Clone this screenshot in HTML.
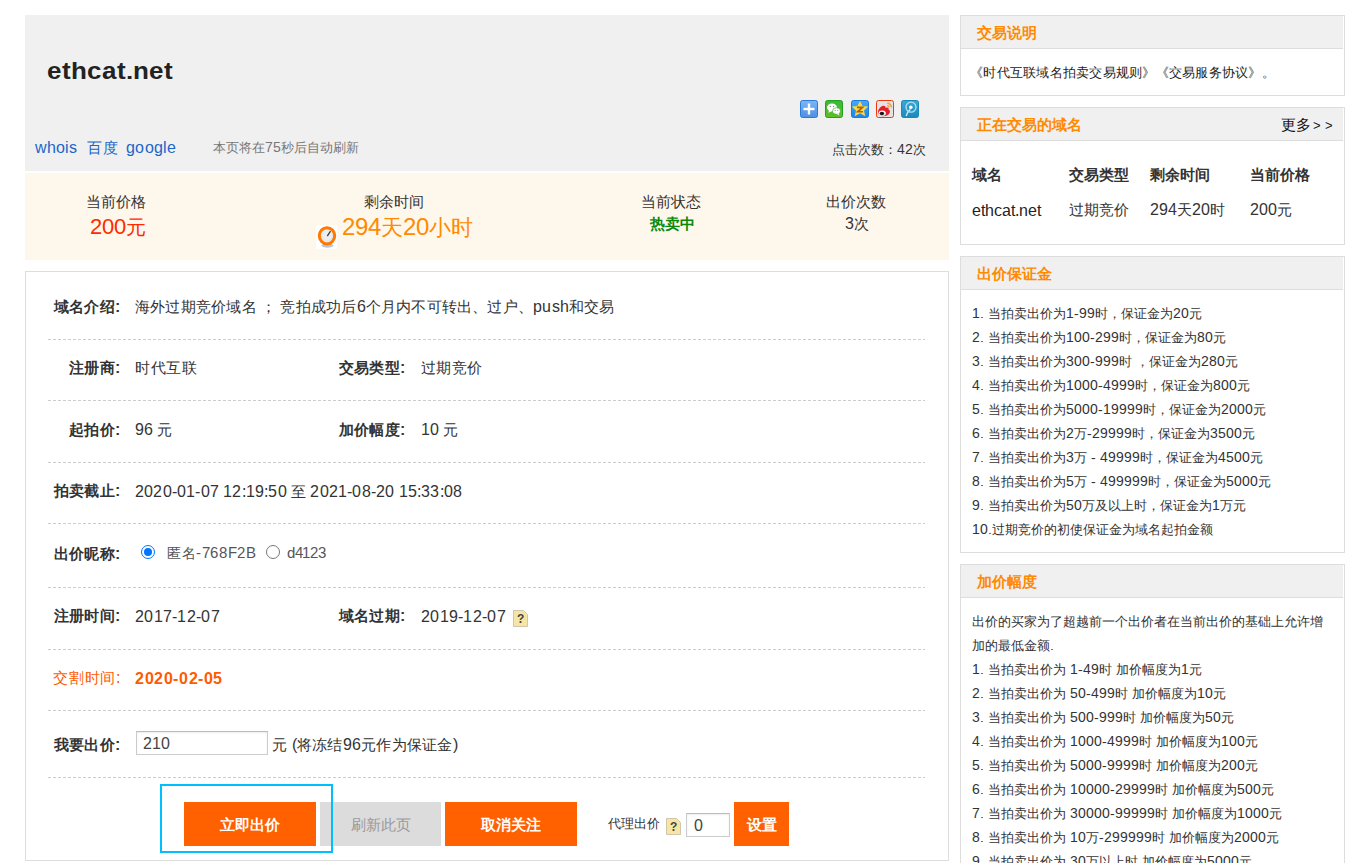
<!DOCTYPE html>
<html><head><meta charset="utf-8">
<style>
@font-face{font-family:"Liberation Sans";src:local("Liberation Sans"),local("LiberationSans");font-weight:normal;size-adjust:109%;unicode-range:U+0000-00FF;}
@font-face{font-family:"Liberation Sans";src:local("Liberation Sans Bold"),local("LiberationSans-Bold");font-weight:bold;size-adjust:109%;unicode-range:U+0000-00FF;}
*{margin:0;padding:0;box-sizing:border-box}
html,body{width:1370px;height:863px;overflow:hidden;background:#fff}
body{position:relative;font-family:"Liberation Sans",sans-serif;color:#333;font-size:15px}
.a{position:absolute;white-space:nowrap}
.hdr{position:absolute;left:25px;top:15px;width:924px;height:156px;background:#f0f0f0}
.stat{position:absolute;left:25px;top:173px;width:924px;height:87px;background:#fef7ec}
.main{position:absolute;left:25px;top:271px;width:924px;height:590px;border:1px solid #ddd}
.dl{position:absolute;left:48px;width:877px;height:1px;background:repeating-linear-gradient(to right,#ccc 0 3px,transparent 3px 5px)}
.lb{position:absolute;font-weight:bold;font-size:15px;line-height:15px;text-align:right;white-space:nowrap;letter-spacing:0.3px;margin-right:-0.3px}
.v{position:absolute;font-size:15px;line-height:15px;white-space:nowrap}
.box{position:absolute;left:960px;width:385px;border:1px solid #ddd;background:#fff}
.bh{position:absolute;left:0;top:0;width:382px;height:33px;background:#f0f0f0;border-bottom:1px solid #ddd}
.bt{position:absolute;left:16px;top:9px;font-size:15px;line-height:15px;font-weight:bold;color:#ff8a00;white-space:nowrap}
.ls{position:absolute;left:11px;font-size:13px;line-height:24px;white-space:nowrap}
.btn{position:absolute;top:802px;height:44px;background:#ff6000;color:#fff;font-weight:bold;font-size:15px;line-height:44px;text-align:center}
</style></head><body>

<!-- header -->
<div class="hdr"></div>
<div class="a" style="left:47px;top:61px;font-size:21px;line-height:21px;font-weight:bold;color:#222;letter-spacing:0.2px;transform:scaleX(1.13);transform-origin:0 0">ethcat.net</div>

<svg class="a" style="left:800px;top:100px" width="119" height="18" viewBox="0 0 119 18">
<defs>
<linearGradient id="g1" x1="0" y1="0" x2="0" y2="1"><stop offset="0" stop-color="#7db6f5"/><stop offset="1" stop-color="#4a90e6"/></linearGradient>
<linearGradient id="g2" x1="0" y1="0" x2="0" y2="1"><stop offset="0" stop-color="#3cb83c"/><stop offset="1" stop-color="#5cc020"/></linearGradient>
<linearGradient id="g3" x1="0" y1="0" x2="0" y2="1"><stop offset="0" stop-color="#45aaf8"/><stop offset="1" stop-color="#1a84ea"/></linearGradient>
<linearGradient id="g5" x1="0" y1="0" x2="0" y2="1"><stop offset="0" stop-color="#3aa8d8"/><stop offset="1" stop-color="#1a88b8"/></linearGradient>
</defs>
<rect x="0.5" y="0.5" width="17" height="17" rx="2" fill="url(#g1)" stroke="#2a7ad6"/>
<rect x="3.5" y="7.8" width="11" height="2.4" fill="#fff"/><rect x="7.8" y="3.5" width="2.4" height="11" fill="#fff"/>
<g transform="translate(25,0)">
<rect x="0.5" y="0.5" width="17" height="17" rx="2" fill="url(#g2)" stroke="#24a024"/>
<ellipse cx="7" cy="7.5" rx="5" ry="4" fill="#fff"/><path d="M4 10 L3.5 13 L6.5 11 Z" fill="#fff"/>
<ellipse cx="11.5" cy="11" rx="4" ry="3.3" fill="#fff" stroke="#2aa52a" stroke-width=".6"/><path d="M13.5 13 L14.5 15.5 L11.8 14 Z" fill="#fff"/>
<circle cx="5.3" cy="6.3" r=".6" fill="#666"/><circle cx="8.6" cy="6.3" r=".6" fill="#666"/><circle cx="10.2" cy="10.3" r=".5" fill="#666"/><circle cx="12.8" cy="10.3" r=".5" fill="#666"/>
</g>
<g transform="translate(51,0)">
<rect x="0.5" y="0.5" width="17" height="17" rx="2" fill="url(#g3)" stroke="#1a7ae0"/>
<path d="M9 0.8 L11.6 6 L17.2 6.6 L13 10.4 L14.3 16.2 L9 13.2 L3.7 16.2 L5 10.4 L0.8 6.6 L6.4 6 Z" fill="#f6d848"/>
<path d="M6 7.4 H11.6 L6.6 11.8 H12" stroke="#b0600c" stroke-width="1.6" fill="none"/>
</g>
<g transform="translate(76,0)">
<rect x="0.5" y="0.5" width="17" height="17" rx="2" fill="#e4e4e4" stroke="#ee3a12"/>
<path d="M2 12.2 C2 9.5 4.5 6.5 7 5.8 C8.8 5.3 9.6 6.2 9.3 7.6 C11.5 7 13.2 7.8 12.6 9.6 C14.2 10.2 14.6 12.2 13 14 C11.5 15.6 9 16.3 6.5 16.2 C3.8 16 2 14.5 2 12.2 Z" fill="#e6202a"/>
<ellipse cx="6.2" cy="13.2" rx="3.6" ry="2.6" fill="#fff"/><ellipse cx="5.9" cy="13.5" rx="2.3" ry="1.8" fill="#1a1a1a"/>
<path d="M11.2 3.2 A4.3 4.3 0 0 1 15.5 7.5" stroke="#f2a234" stroke-width="1.6" fill="none"/><path d="M11.2 5.8 A1.8 1.8 0 0 1 13 7.6" stroke="#f2a234" stroke-width="1.4" fill="none"/>
</g>
<g transform="translate(101,0)">
<rect x="0.5" y="0.5" width="17" height="17" rx="2" fill="url(#g5)" stroke="#1a88b8"/>
<path d="M5.2 16 C6 13 7.5 10.8 9.4 9.2" stroke="#cdeaf6" stroke-width="1.5" fill="none"/>
<circle cx="10" cy="7.2" r="5" fill="none" stroke="#b8e0f2" stroke-width="1.3"/>
<circle cx="9.8" cy="7.2" r="1.8" fill="#fff"/>
</g>
</svg>
<div class="a" style="left:35px;top:140px;font-size:15px;line-height:15px;color:#1a66c8">whois</div>
<div class="a" style="left:87px;top:140px;font-size:15px;line-height:15px;color:#1a66c8;letter-spacing:0.5px">百度</div>
<div class="a" style="left:126px;top:140px;font-size:15px;line-height:15px;color:#1a66c8;letter-spacing:0.3px">google</div>
<div class="a" style="left:213px;top:141px;font-size:13px;line-height:13px;color:#777">本页将在75秒后自动刷新</div>
<div class="a" style="left:832px;top:143px;font-size:13px;line-height:13px;color:#333">点击次数：42次</div>

<!-- stats -->
<div class="stat"></div>
<div class="a" style="left:23px;top:194px;width:185px;text-align:center;font-size:15px;line-height:15px">当前价格</div>
<div class="a" style="left:25px;top:217px;width:185px;text-align:center;font-size:20px;line-height:20px;color:#ff2a00">200元</div>
<div class="a" style="left:209px;top:194px;width:370px;text-align:center;font-size:15px;line-height:15px">剩余时间</div>
<div class="a" style="left:316px;top:225px;width:21px;height:24px;background:#fff"><svg width="21" height="24" viewBox="0 0 21 24"><ellipse cx="11.5" cy="20.5" rx="6" ry="2.2" fill="#7a9ab8" opacity=".55"/><ellipse cx="11" cy="10.8" rx="7.7" ry="8.1" fill="#e6e8ea" stroke="#ff7800" stroke-width="3"/><ellipse cx="11.3" cy="10.3" rx="4.5" ry="4.8" fill="#eceef0"/><path d="M11.6 10.6 L14.2 6.6" stroke="#444" stroke-width="1.4" stroke-linecap="round"/></svg></div>
<div class="a" style="left:342px;top:216px;font-size:22px;line-height:22px;color:#ff8a00">294天20小时</div>
<div class="a" style="left:578px;top:194px;width:185px;text-align:center;font-size:15px;line-height:15px">当前状态</div>
<div class="a" style="left:580px;top:216px;width:185px;text-align:center;font-size:15px;line-height:15px;font-weight:bold;color:#0a8a0a">热卖中</div>
<div class="a" style="left:764px;top:194px;width:184px;text-align:center;font-size:15px;line-height:15px">出价次数</div>
<div class="a" style="left:765px;top:216px;width:184px;text-align:center;font-size:15px;line-height:15px">3次</div>


<!-- main -->
<div class="main"></div>
<div class="dl" style="top:339px"></div>
<div class="dl" style="top:400px"></div>
<div class="dl" style="top:462px"></div>
<div class="dl" style="top:523px"></div>
<div class="dl" style="top:587px"></div>
<div class="dl" style="top:649px"></div>
<div class="dl" style="top:710px"></div>
<div class="dl" style="top:777px"></div>

<div class="lb" style="right:1250px;top:299px">域名介绍:</div>
<div class="v" style="left:135px;top:299px;letter-spacing:0.22px">海外过期竞价域名 ； 竞拍成功后6个月内不可转出、过户、push和交易</div>

<div class="lb" style="right:1250px;top:360px">注册商:</div>
<div class="v" style="left:135px;top:360px;letter-spacing:0.5px">时代互联</div>
<div class="lb" style="right:965px;top:360px">交易类型:</div>
<div class="v" style="left:421px;top:360px;letter-spacing:0.4px">过期竞价</div>

<div class="lb" style="right:1250px;top:422px">起拍价:</div>
<div class="v" style="left:135px;top:422px">96 元</div>
<div class="lb" style="right:965px;top:422px">加价幅度:</div>
<div class="v" style="left:421px;top:422px">10 元</div>

<div class="lb" style="right:1250px;top:483px">拍卖截止:</div>
<div class="v" style="left:135px;top:484px;letter-spacing:0.2px">2020-01-07 12:19:50 至 2021-08-20 15:33:08</div>

<div class="lb" style="right:1250px;top:546px">出价昵称:</div>
<div class="a" style="left:141px;top:545px;width:14px;height:14px;border-radius:50%;border:1px solid #0075ff;background:#fff"><div style="position:absolute;left:2px;top:2px;width:8px;height:8px;border-radius:50%;background:#0075ff"></div></div>
<div class="v" style="left:167px;top:546px;color:#555;font-size:14px;line-height:14px;letter-spacing:0.6px">匿名-768F2B</div>
<div class="a" style="left:266px;top:545px;width:14px;height:14px;border-radius:50%;border:1px solid #767676;background:#fff"></div>
<div class="v" style="left:287px;top:546px;color:#555;font-size:14px;line-height:14px;letter-spacing:-0.3px">d4123</div>

<div class="lb" style="right:1250px;top:608px">注册时间:</div>
<div class="v" style="left:135px;top:609px;letter-spacing:0.3px">2017-12-07</div>
<div class="lb" style="right:965px;top:608px">域名过期:</div>
<div class="v" style="left:421px;top:609px;letter-spacing:0.3px">2019-12-07</div>
<div class="a" style="left:513px;top:610px;width:15px;height:17px"><svg width="15" height="17" viewBox="0 0 15 17"><path d="M0.5 0.5 H10.5 L14.5 4.5 V16.5 H0.5 Z" fill="#f7e6a3" stroke="#cfc6b0"/><text x="7.5" y="13" font-family="Liberation Sans" font-weight="bold" font-size="11" fill="#444" text-anchor="middle">?</text></svg></div>

<div class="lb" style="right:1250px;top:670px;color:#ff5a00;font-weight:normal;letter-spacing:0.7px;margin-right:-0.7px">交割时间:</div>
<div class="v" style="left:135px;top:671px;color:#ff5a00;font-weight:bold;letter-spacing:0.6px">2020-02-05</div>

<div class="lb" style="right:1250px;top:737px">我要出价:</div>
<div class="a" style="left:136px;top:731px;width:132px;height:24px;border:1px solid #ccc;border-top-color:#bbb;box-shadow:inset 0 1px 2px rgba(0,0,0,.08);background:#fff;font-size:15px;line-height:22px;padding-left:6px;color:#444">210</div>
<div class="v" style="left:272px;top:737px;letter-spacing:0.25px">元 (将冻结96元作为保证金)</div>

<div class="btn" style="left:184px;width:132px">立即出价</div>
<div class="btn" style="left:320px;width:121px;background:#dcdcdc;color:#999;font-weight:normal">刷新此页</div>
<div class="btn" style="left:445px;width:132px">取消关注</div>
<div class="a" style="left:608px;top:817px;font-size:13px;line-height:13px">代理出价</div>
<div class="a" style="left:666px;top:818px;width:15px;height:17px"><svg width="15" height="17" viewBox="0 0 15 17"><path d="M0.5 0.5 H10.5 L14.5 4.5 V16.5 H0.5 Z" fill="#f7e6a3" stroke="#cfc6b0"/><text x="7.5" y="13" font-family="Liberation Sans" font-weight="bold" font-size="11" fill="#444" text-anchor="middle">?</text></svg></div>
<div class="a" style="left:686px;top:813px;width:44px;height:24px;border:1px solid #ccc;border-top-color:#bbb;box-shadow:inset 0 1px 2px rgba(0,0,0,.08);background:#fff;font-size:15px;line-height:22px;padding-left:7px;color:#444">0</div>
<div class="btn" style="left:734px;width:55px">设置</div>
<div class="a" style="left:160px;top:784px;width:173px;height:69px;border:2px solid #00bfff"></div>


<!-- right -->
<div class="box" style="top:15px;height:81px">
  <div class="bh"><div class="bt">交易说明</div></div>
  <div class="a" style="left:9px;top:50px;font-size:13px;line-height:13px;letter-spacing:0.25px;color:#222">《时代互联域名拍卖交易规则》《交易服务协议》。</div>
</div>
<div class="box" style="top:107px;height:138px">
  <div class="bh"><div class="bt">正在交易的域名</div><div class="a" style="left:320px;top:9px;font-size:15px;line-height:15px;color:#111">更多<span style="font-size:12px;letter-spacing:4px;margin-left:2px">&gt;&gt;</span></div></div>
  <div class="a" style="left:11px;top:59px;font-size:15px;line-height:15px;font-weight:bold">域名</div>
  <div class="a" style="left:108px;top:59px;font-size:15px;line-height:15px;font-weight:bold">交易类型</div>
  <div class="a" style="left:189px;top:59px;font-size:15px;line-height:15px;font-weight:bold">剩余时间</div>
  <div class="a" style="left:289px;top:59px;font-size:15px;line-height:15px;font-weight:bold">当前价格</div>
  <div class="a" style="left:11px;top:95px;font-size:15px;line-height:15px;color:#222">ethcat.net</div>
  <div class="a" style="left:108px;top:94px;font-size:15px;line-height:15px">过期竞价</div>
  <div class="a" style="left:189px;top:94px;font-size:15px;line-height:15px">294天20时</div>
  <div class="a" style="left:289px;top:94px;font-size:15px;line-height:15px">200元</div>
</div>
<div class="box" style="top:256px;height:297px">
  <div class="bh"><div class="bt">出价保证金</div></div>
  <div class="ls" style="top:44px">1. 当拍卖出价为1-99时，保证金为20元</div>
  <div class="ls" style="top:68px">2. 当拍卖出价为100-299时，保证金为80元</div>
  <div class="ls" style="top:92px">3. 当拍卖出价为300-999时 ，保证金为280元</div>
  <div class="ls" style="top:116px">4. 当拍卖出价为1000-4999时，保证金为800元</div>
  <div class="ls" style="top:140px">5. 当拍卖出价为5000-19999时，保证金为2000元</div>
  <div class="ls" style="top:164px">6. 当拍卖出价为2万-29999时，保证金为3500元</div>
  <div class="ls" style="top:188px">7. 当拍卖出价为3万 - 49999时，保证金为4500元</div>
  <div class="ls" style="top:212px">8. 当拍卖出价为5万 - 499999时，保证金为5000元</div>
  <div class="ls" style="top:236px">9. 当拍卖出价为50万及以上时，保证金为1万元</div>
  <div class="ls" style="top:260px">10.过期竞价的初使保证金为域名起拍金额</div>
</div>
<div class="box" style="top:564px;height:400px">
  <div class="bh"><div class="bt">加价幅度</div></div>
  <div class="ls" style="top:44px">出价的买家为了超越前一个出价者在当前出价的基础上允许增</div>
  <div class="ls" style="top:68px">加的最低金额.</div>
  <div class="ls" style="top:92px">1. 当拍卖出价为 1-49时 加价幅度为1元</div>
  <div class="ls" style="top:116px">2. 当拍卖出价为 50-499时 加价幅度为10元</div>
  <div class="ls" style="top:140px">3. 当拍卖出价为 500-999时 加价幅度为50元</div>
  <div class="ls" style="top:164px">4. 当拍卖出价为 1000-4999时 加价幅度为100元</div>
  <div class="ls" style="top:188px">5. 当拍卖出价为 5000-9999时 加价幅度为200元</div>
  <div class="ls" style="top:212px">6. 当拍卖出价为 10000-29999时 加价幅度为500元</div>
  <div class="ls" style="top:236px">7. 当拍卖出价为 30000-99999时 加价幅度为1000元</div>
  <div class="ls" style="top:260px">8. 当拍卖出价为 10万-299999时 加价幅度为2000元</div>
  <div class="ls" style="top:284px">9. 当拍卖出价为 30万以上时 加价幅度为5000元</div>
</div>

</body></html>
